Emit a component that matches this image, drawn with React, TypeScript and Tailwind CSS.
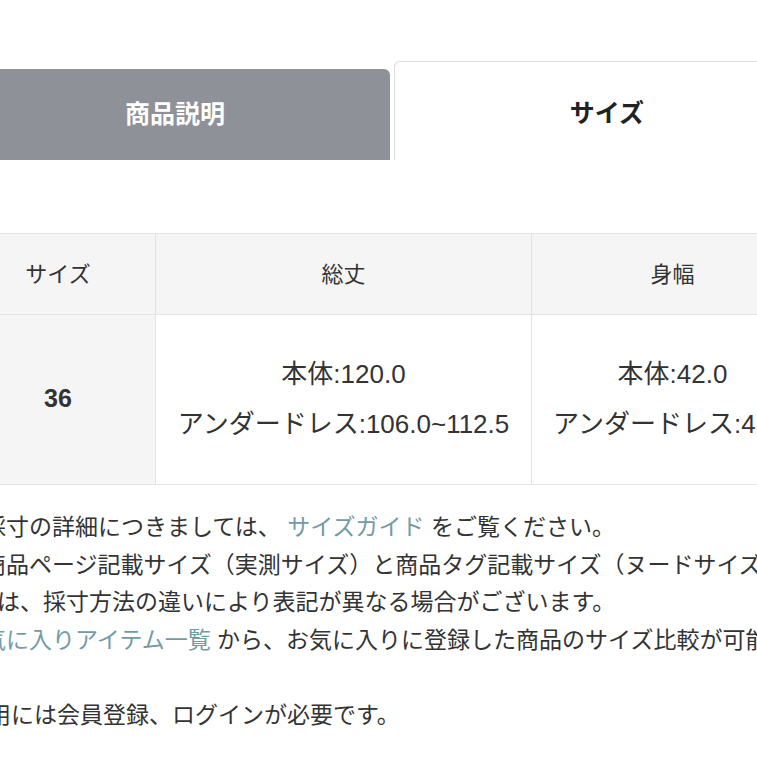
import React from 'react';

const FONT = "font-['Liberation_Sans','Noto_Sans_CJK_JP',sans-serif]";

export default function App() {
    return (
        <div className={`w-[757px] h-[757px] overflow-hidden bg-white text-[#333] ${FONT}`}>
            <div className="ml-[-40px] w-[900px] pt-[61px]">
                {/* Tabs */}
                <div className="flex items-end gap-[4px] h-[99px]">
                    <div className="w-[430px] h-[91px] bg-[#8e9198] rounded-tr-[6px] flex items-center justify-center text-white font-bold text-[25px]">
                        商品説明
                    </div>
                    <div className="w-[426px] h-[99px] bg-white border border-b-0 border-[#dcdcdc] rounded-tl-[6px] flex items-center justify-center pt-[6px] text-[#222] font-bold text-[25px]">
                        サイズ
                    </div>
                </div>

                {/* Size table */}
                <table className="mt-[73px] border-collapse table-fixed w-[1100px]">
                    <colgroup>
                        <col className="w-[195px]" />
                        <col className="w-[376px]" />
                        <col className="w-[282px]" />
                        <col className="w-[247px]" />
                    </colgroup>
                    <thead>
                        <tr className="h-[81px] bg-[#f5f5f5] text-[22px]">
                            <th className="font-normal border border-[#e3e3e3]">サイズ</th>
                            <th className="font-normal border border-[#e3e3e3]">総丈</th>
                            <th className="font-normal border border-[#e3e3e3]">身幅</th>
                            <th className="font-normal border border-[#e3e3e3]">肩幅</th>
                        </tr>
                    </thead>
                    <tbody>
                        <tr className="h-[170px] text-[26px]">
                            <td className="bg-[#f5f5f5] border border-[#e3e3e3] text-center font-bold text-[25px] pb-[2px]">36</td>
                            <td className="border border-[#e3e3e3] text-center leading-[50px] whitespace-nowrap pb-[2px]">
                                <div>本体:120.0</div>
                                <div>アンダードレス:106.0~112.5</div>
                            </td>
                            <td className="border border-[#e3e3e3] text-center leading-[50px] whitespace-nowrap pb-[2px]">
                                <div>本体:42.0</div>
                                <div>アンダードレス:45.0</div>
                            </td>
                            <td className="border border-[#e3e3e3] text-center leading-[50px] whitespace-nowrap pb-[2px]">
                                <div>本体:36.0</div>
                                <div>アンダードレス:34.0</div>
                            </td>
                        </tr>
                    </tbody>
                </table>

                {/* Notes */}
                <div className="mt-[24px] text-[23px] leading-[37.5px] whitespace-nowrap">
                    <div>※採寸の詳細につきましては、 <span className="text-[#729ba6]">サイズガイド</span> をご覧ください。</div>
                    <div>※商品ページ記載サイズ（実測サイズ）と商品タグ記載サイズ（ヌードサイズ）で</div>
                    <div className="pl-[37px]">は、採寸方法の違いにより表記が異なる場合がございます。</div>
                    <div><span className="text-[#729ba6]">お気に入りアイテム一覧</span> から、お気に入りに登録した商品のサイズ比較が可能です。</div>
                    <div>&nbsp;</div>
                    <div className="pl-[5px]">利用には会員登録、ログインが必要です。</div>
                </div>
            </div>
        </div>
    );
}
